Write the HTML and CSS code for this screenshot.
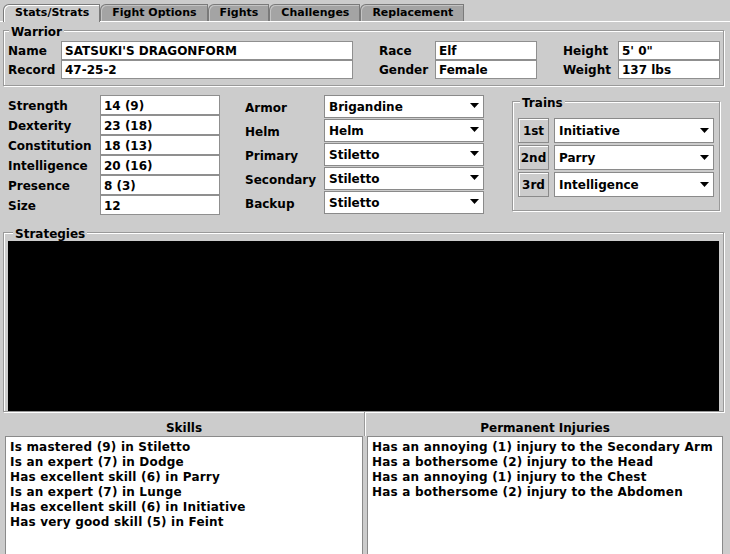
FILE: index.html
```html
<!DOCTYPE html>
<html lang="en">
<head>
    <meta charset="UTF-8">
    <title>Warrior - Stats/Strats</title>
    <link rel="stylesheet" href="styles.css">
</head>
<body>
    <div class="tabs">
        <div class="tab active">Stats/Strats</div>
        <div class="tab">Fight Options</div>
        <div class="tab">Fights</div>
        <div class="tab">Challenges</div>
        <div class="tab">Replacement</div>
    </div>

    <div class="content">
        <div class="group warrior">
            <div class="group-title">Warrior</div>
            <div class="warrior-fields">
                <div class="pair pair-name">
                    <span>Name</span><div class="field">SATSUKI'S DRAGONFORM</div>
                    <span>Record</span><div class="field">47-25-2</div>
                </div>
                <div class="pair pair-race">
                    <span>Race</span><div class="field">Elf</div>
                    <span>Gender</span><div class="field">Female</div>
                </div>
                <div class="pair pair-height">
                    <span>Height</span><div class="field">5' 0"</div>
                    <span>Weight</span><div class="field">137 lbs</div>
                </div>
            </div>
        </div>

        <div class="middle">
            <div class="stats">
                <span>Strength</span><div class="field">14 (9)</div>
                <span>Dexterity</span><div class="field">23 (18)</div>
                <span>Constitution</span><div class="field">18 (13)</div>
                <span>Intelligence</span><div class="field">20 (16)</div>
                <span>Presence</span><div class="field">8 (3)</div>
                <span>Size</span><div class="field">12</div>
            </div>

            <div class="gear">
                <span>Armor</span>
                <div class="combo"><span>Brigandine</span><svg class="arrow" width="9" height="5"><polygon points="0,0 9,0 4.5,5"/></svg></div>
                <span>Helm</span>
                <div class="combo"><span>Helm</span><svg class="arrow" width="9" height="5"><polygon points="0,0 9,0 4.5,5"/></svg></div>
                <span>Primary</span>
                <div class="combo"><span>Stiletto</span><svg class="arrow" width="9" height="5"><polygon points="0,0 9,0 4.5,5"/></svg></div>
                <span>Secondary</span>
                <div class="combo"><span>Stiletto</span><svg class="arrow" width="9" height="5"><polygon points="0,0 9,0 4.5,5"/></svg></div>
                <span>Backup</span>
                <div class="combo"><span>Stiletto</span><svg class="arrow" width="9" height="5"><polygon points="0,0 9,0 4.5,5"/></svg></div>
            </div>

            <div class="group trains">
                <div class="group-title">Trains</div>
                <div class="train-rows">
                    <div class="train-btn">1st</div>
                    <div class="combo"><span>Initiative</span><svg class="arrow" width="9" height="5"><polygon points="0,0 9,0 4.5,5"/></svg></div>
                    <div class="train-btn">2nd</div>
                    <div class="combo"><span>Parry</span><svg class="arrow" width="9" height="5"><polygon points="0,0 9,0 4.5,5"/></svg></div>
                    <div class="train-btn">3rd</div>
                    <div class="combo"><span>Intelligence</span><svg class="arrow" width="9" height="5"><polygon points="0,0 9,0 4.5,5"/></svg></div>
                </div>
            </div>
        </div>

        <div class="group strategies">
            <div class="group-title">Strategies</div>
            <div class="strat-area"></div>
        </div>

        <div class="lists">
            <div class="list-col skills">
                <div class="list-head">Skills</div>
                <div class="list-box">
                    <div>Is mastered (9) in Stiletto</div>
                    <div>Is an expert (7) in Dodge</div>
                    <div>Has excellent skill (6) in Parry</div>
                    <div>Is an expert (7) in Lunge</div>
                    <div>Has excellent skill (6) in Initiative</div>
                    <div>Has very good skill (5) in Feint</div>
                </div>
            </div>
            <div class="divider"></div>
            <div class="list-col injuries">
                <div class="list-head">Permanent Injuries</div>
                <div class="list-box">
                    <div>Has an annoying (1) injury to the Secondary Arm</div>
                    <div>Has a bothersome (2) injury to the Head</div>
                    <div>Has an annoying (1) injury to the Chest</div>
                    <div>Has a bothersome (2) injury to the Abdomen</div>
                </div>
            </div>
        </div>
    </div>
</body>
</html>
```

FILE: styles.css
```css
* {
    box-sizing: border-box;
}

body {
    margin: 0;
    width: 730px;
    height: 554px;
    overflow: hidden;
    background-color: #cccccc;
    font-family: "DejaVu Sans", sans-serif;
    font-weight: bold;
    font-size: 12px;
    color: #000;
}

/* tab strip */
.tabs {
    display: flex;
    height: 21px;
    padding: 4px 0 0 3px;
    font-size: 11px;
}

.tab {
    height: 17px;
    line-height: 16px;
    padding: 0 10px 0 11px;
    background-color: #a4a4a4;
    border: 1px solid #7a7a7a;
    border-bottom: none;
    border-top-left-radius: 6px;
    box-shadow: inset 1px 1px 0 #c4c4c4;
}

.tab.active {
    position: relative;
    height: 18px;
    background-color: #cccccc;
    box-shadow: inset 1px 1px 0 #fff;
}

.content {
    border-top: 1px solid #fff;
    padding: 8px 6px 0 3px;
}

/* etched titled borders */
.group {
    border: 1px solid #999;
    box-shadow: inset 1px 1px 0 #fff, 1px 1px 0 #fff;
}

.group-title {
    width: fit-content;
    height: 14px;
    line-height: 14px;
    margin: -6px 0 0 5px;
    padding: 0 2px;
    background-color: #cccccc;
}

.field {
    height: 19px;
    line-height: 17px;
    padding: 0 3px;
    background-color: #fff;
    border: 1px solid #8f8f8f;
    white-space: nowrap;
}

/* warrior */
.warrior-fields {
    display: flex;
    gap: 26px;
    margin-top: 2px;
    padding: 0 0 6px 4px;
}

.warrior-fields .field {
    padding-top: 1px;
}

.pair {
    display: grid;
    align-items: center;
}

.pair-name {
    grid-template-columns: 53px 292px;
}

.pair-race {
    grid-template-columns: 56px 102px;
}

.pair-height {
    grid-template-columns: 55px 102px;
}

/* stats, gear, trains */
.middle {
    display: flex;
    align-items: flex-start;
    margin-top: 9px;
}

.stats {
    display: grid;
    grid-template-columns: 92px 120px;
    grid-auto-rows: 20px;
    align-items: center;
    margin-left: 5px;
}

.stats span {
    padding-top: 2px;
}

.stats .field {
    height: 20px;
    line-height: 18px;
    padding-top: 1px;
}

.gear {
    display: grid;
    grid-template-columns: 79px 160px;
    grid-auto-rows: 23px;
    row-gap: 1px;
    align-items: center;
    margin-left: 25px;
}

.gear > span {
    padding-top: 2px;
}

.combo {
    display: flex;
    justify-content: space-between;
    align-items: center;
    height: 100%;
    padding: 0 4px;
    background-color: #fff;
    border: 1px solid #8a8a8a;
}

.arrow {
    margin-top: -2px;
}

.trains {
    width: 208px;
    margin: 6px 0 0 28px;
    padding: 0 4px 13px 5px;
}

.trains .group-title {
    margin-left: 2px;
}

.train-rows {
    display: grid;
    grid-template-columns: 31px 160px;
    grid-auto-rows: 25px;
    column-gap: 5px;
    row-gap: 2px;
    margin-top: 8px;
}

.train-rows .combo {
    padding-top: 1px;
}

.train-btn {
    display: flex;
    justify-content: center;
    align-items: center;
    background-color: #cccccc;
    border: 1px solid #8a8a8a;
    box-shadow: inset 1px 1px 0 #fff;
}

/* strategies */
.strategies {
    margin-top: 17px;
    padding: 0 4px 0 4px;
}

.strat-area {
    height: 170px;
    background-color: #000;
}

/* skills and injuries */
.lists {
    display: flex;
    margin-left: 2px;
}

.list-col {
    width: 358px;
}

.list-col.injuries {
    width: 356px;
}

.divider {
    width: 4px;
    height: 24px;
    background: linear-gradient(to right, transparent 1px, #999 1px, #999 2px, #fff 2px, #fff 3px, transparent 3px);
}

.list-head {
    height: 24px;
    padding-top: 9px;
    line-height: 14px;
    text-align: center;
}

.list-box {
    height: 130px;
    padding: 3px 4px 2px;
    line-height: 15px;
    letter-spacing: 0.2px;
    background-color: #fff;
    border: 1px solid #8a8a8a;
    white-space: nowrap;
}
```
